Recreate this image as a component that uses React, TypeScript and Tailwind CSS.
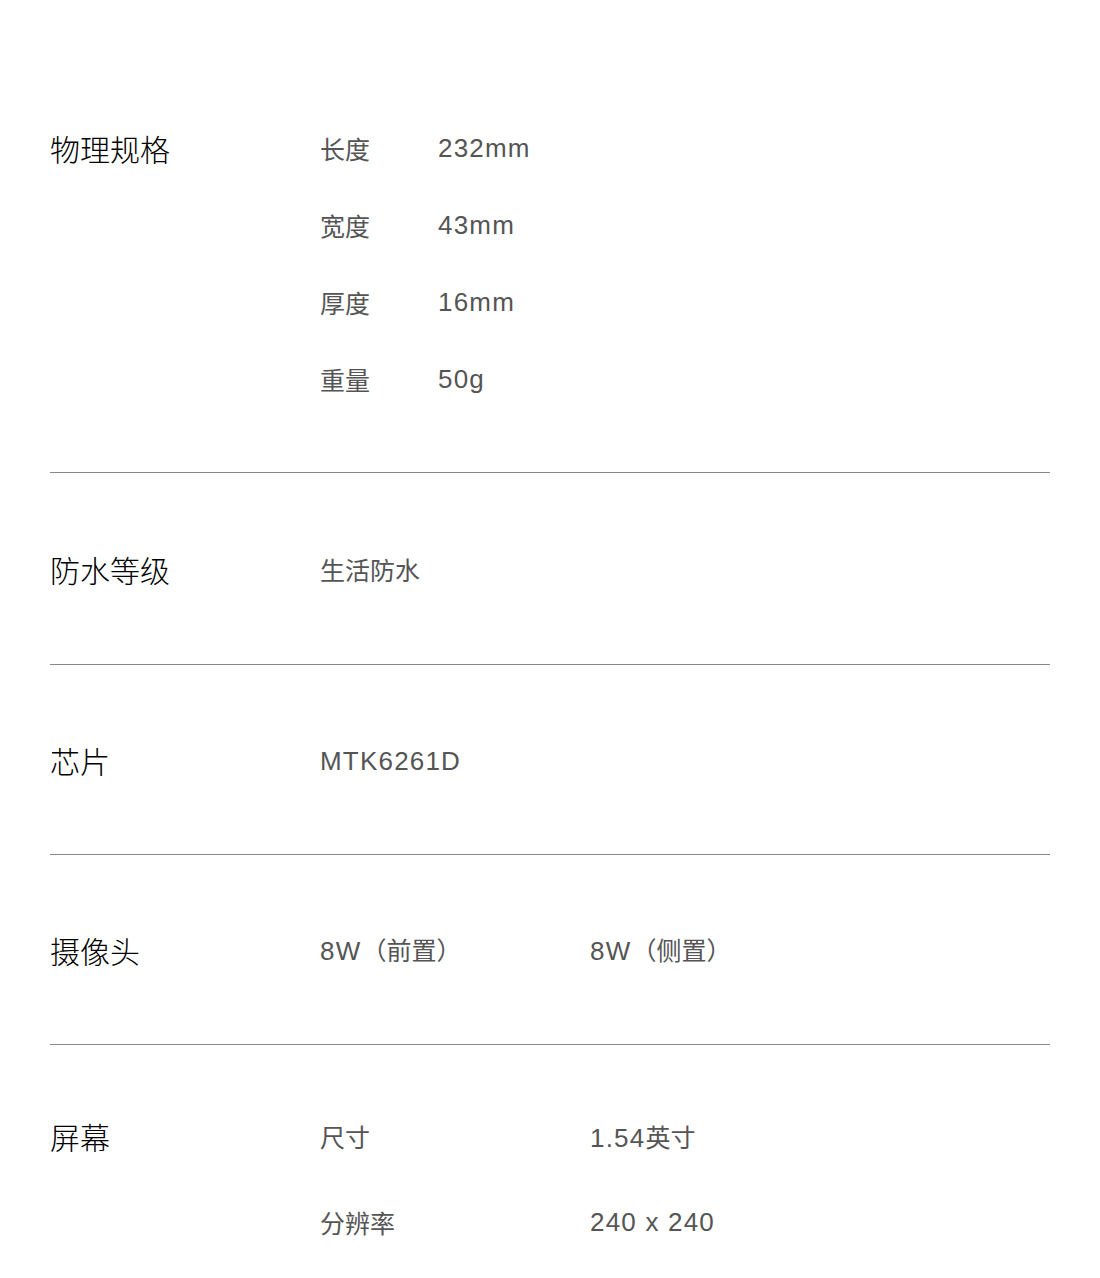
import React from "react";

const fontStack = {
  fontFamily: '"Noto Sans CJK SC", "Noto Sans", sans-serif',
};

const latin = {
  fontFamily: '"Liberation Sans", "Noto Sans CJK SC", sans-serif',
};

const Divider = () => <div className="h-px w-full bg-[#888888]" />;

const SectionTitle = ({ children }: { children: React.ReactNode }) => (
  <p className="w-[270px] shrink-0 text-[30px] leading-[36px] font-light text-black">{children}</p>
);

const Latin = ({ children }: { children: React.ReactNode }) => (
  <span className="text-[26px] tracking-[1.2px]" style={latin}>
    {children}
  </span>
);

const App = () => {
  return (
    <div className="bg-white px-[50px] pb-[60px] pt-[130px]" style={fontStack}>
      {/* 物理规格 */}
      <div className="flex pb-[75px]">
        <SectionTitle>物理规格</SectionTitle>
        <div className="flex flex-col gap-[41px] text-[25px] leading-[36px] text-[#555555]">
          {[
            ["长度", "232mm"],
            ["宽度", "43mm"],
            ["厚度", "16mm"],
            ["重量", "50g"],
          ].map(([k, v]) => (
            <div key={k} className="flex">
              <span className="w-[118px]">{k}</span>
              <Latin>{v}</Latin>
            </div>
          ))}
        </div>
      </div>
      <Divider />

      <div className="flex items-center pt-[78px] pb-[77px]">
        <SectionTitle>防水等级</SectionTitle>
        <span className="text-[25px] leading-[36px] text-[#555555]">生活防水</span>
      </div>
      <Divider />

      <div className="flex items-center pt-[76px] pb-[75px]">
        <SectionTitle>芯片</SectionTitle>
        <span className="text-[25px] leading-[36px] text-[#555555]">
          <Latin>MTK6261D</Latin>
        </span>
      </div>
      <Divider />

      <div className="flex items-center pt-[76px] pb-[75px]">
        <SectionTitle>摄像头</SectionTitle>
        <div className="flex text-[25px] leading-[36px] text-[#555555]">
          <span className="w-[270px]">
            <Latin>8W</Latin>（前置）
          </span>
          <span>
            <Latin>8W</Latin>（侧置）
          </span>
        </div>
      </div>
      <Divider />

      <div className="flex pt-[73px]">
        <SectionTitle>屏幕</SectionTitle>
        <div className="flex flex-col gap-[48px] text-[25px] leading-[36px] text-[#555555]">
          <div className="flex">
            <span className="w-[270px]">尺寸</span>
            <span>
              <Latin>1.54</Latin>英寸
            </span>
          </div>
          <div className="flex">
            <span className="w-[270px]">分辨率</span>
            <Latin>240 x 240</Latin>
          </div>
        </div>
      </div>
    </div>
  );
};

export default App;
